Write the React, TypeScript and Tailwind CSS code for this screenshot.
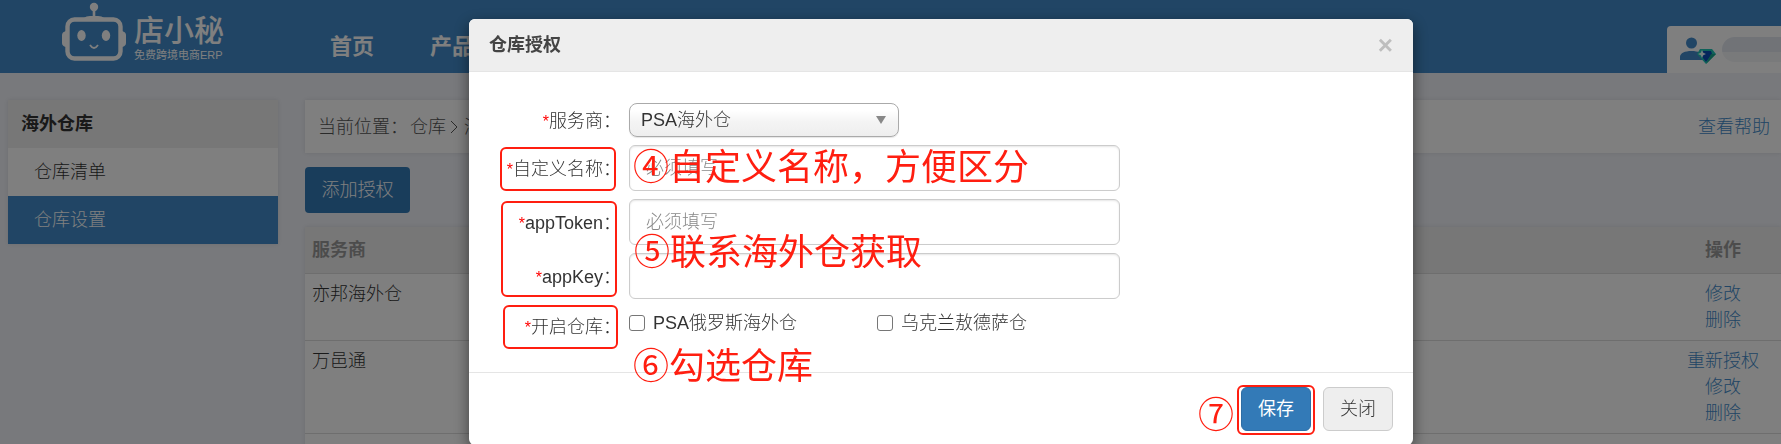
import { useState } from 'react';

const FONT = "font-['Liberation_Sans','Noto_Sans_CJK_SC',sans-serif]";

const sideItems = [
    { label: '仓库清单', active: false },
    { label: '仓库设置', active: true },
];

const providers = [
    { name: '亦邦海外仓', actions: ['修改', '删除'] },
    { name: '万邑通', actions: ['重新授权', '修改', '删除'] },
    { name: '', actions: [] },
];

const warehouses = ['PSA俄罗斯海外仓', '乌克兰敖德萨仓'];

function RobotIcon() {
    return (
        <svg width="64" height="60" viewBox="0 0 64 60" fill="none">
            <circle cx="32" cy="5" r="4.2" fill="#fff" />
            <path d="M32 8v8" stroke="#fff" strokeWidth="2.6" />
            <path d="M22 16q2-2 6-2h8q4 0 6 2z" fill="#fff" />
            <rect x="5.5" y="17.500" width="53" height="39" rx="7" stroke="#fff" strokeWidth="4.4" />
            <path d="M4 29v16q-4-1-4-4v-8q0-3 4-4zM60 29v16q4-1 4-4v-8q0-3-4-4z" fill="#fff" />
            <ellipse cx="19.5" cy="33.500" rx="4.2" ry="5.4" fill="#fff" />
            <ellipse cx="44" cy="33.500" rx="4.2" ry="5.4" fill="#fff" />
            <path d="M28 43q4 6 8 0" stroke="#fff" strokeWidth="1.8" />
        </svg>
    );
}

function UserIcon() {
    return (
        <svg width="36" height="27" viewBox="0 0 36 27">
            <circle cx="11.5" cy="6" r="5.5" fill="#428bca" />
            <path d="M0 23v-3c0-4 5-6 11.500-6S23 16 23 20v3z" fill="#428bca" />
            <path d="M20 12h12l4 5-10 10-9-10z" fill="#1fc5b5" />
            <path d="M23 14h8l1 3-6 8-6-8z" fill="#0a4fb8" />
            <path d="M26 27l5-10h5z" fill="#1aa58c" />
            <path d="M22 13l1.300 2.700L26 17l-2.700 1.300L22 21l-1.300-2.700L18 17l2.700-1.300z" fill="#e8ffff" />
        </svg>
    );
}

function Mark({ className }: { className: string }) {
    return <span className={`pointer-events-none absolute rounded-md border-2 border-[#ff1e10] ${className}`} />;
}

function Note({ className, children }: { className: string; children: string }) {
    return (
        <span className={`pointer-events-none absolute z-10 whitespace-nowrap text-4xl leading-[36px] font-normal text-[#ff1e10] ${className}`}>
            {children}
        </span>
    );
}

function Label({ htmlFor, text }: { htmlFor?: string; text: string }) {
    return (
        <label htmlFor={htmlFor} className="w-[152px] shrink-0 whitespace-nowrap pt-[2px] text-right">
            <span className="text-base text-[#ff0000]">*</span>
            {text}：
        </label>
    );
}

function TextField({ id, value, placeholder, onChange }: { id: string; value: string; placeholder?: string; onChange: (v: string) => void }) {
    return (
        <input
            id={id}
            type="text"
            value={value}
            placeholder={placeholder}
            onChange={(e) => onChange(e.target.value)}
            className="h-[46px] w-[491px] rounded-md border border-[#ccc] bg-white px-4 shadow-[inset_0_1px_2px_rgba(0,0,0,0.1)] outline-none placeholder:text-[#888]"
        />
    );
}

function AuthDialog() {
    const [form, setForm] = useState({ name: '', token: '', key: '' });
    const [checked, setChecked] = useState<string[]>([]);

    const toggle = (w: string) => setChecked(checked.includes(w) ? checked.filter((c) => c !== w) : [...checked, w]);

    return (
        <div role="dialog" aria-labelledby="dialog-title" className="w-[944px] rounded-md bg-white text-[#333] shadow-[0_5px_15px_rgba(0,0,0,0.5)]">
            <div className="flex h-[53px] items-center justify-between rounded-t-md border-b border-[#e5e5e5] bg-[#eee] px-5">
                <h4 id="dialog-title" className="font-bold text-[#444]">仓库授权</h4>
                <button aria-label="关闭窗口" className="text-[26px] leading-none font-bold text-[#bebebe]">×</button>
            </div>

            <form className="flex h-[300px] flex-col gap-2 pt-[31px]">
                <div className="flex items-center gap-2">
                    <Label htmlFor="provider" text="服务商" />
                    <div className="relative">
                        <select
                            id="provider"
                            className="h-[34px] w-[270px] appearance-none rounded-lg border border-[#aaa] bg-linear-to-b from-white from-20% via-[#f4f4f4] via-55% to-[#eee] px-[11px] shadow-[0_1px_1px_rgba(0,0,0,0.1)]"
                        >
                            <option>PSA海外仓</option>
                        </select>
                        <span className="pointer-events-none absolute top-[13px] right-[13px] border-x-5 border-t-8 border-x-transparent border-t-[#888]" />
                    </div>
                </div>

                <div className="relative flex items-center gap-2">
                    <Label htmlFor="name" text="自定义名称" />
                    <TextField id="name" value={form.name} placeholder="必须填写" onChange={(v) => setForm({ ...form, name: v })} />
                    <Mark className="top-[2px] left-[31px] h-11 w-[116px]" />
                    <Note className="top-[5px] left-[164px]">④自定义名称，方便区分</Note>
                </div>

                <div className="relative flex flex-col gap-2">
                    <div className="flex items-center gap-2">
                        <Label htmlFor="token" text="appToken" />
                        <TextField id="token" value={form.token} placeholder="必须填写" onChange={(v) => setForm({ ...form, token: v })} />
                    </div>
                    <div className="flex items-center gap-2">
                        <Label htmlFor="key" text="appKey" />
                        <TextField id="key" value={form.key} onChange={(v) => setForm({ ...form, key: v })} />
                    </div>
                    <Mark className="top-[2px] left-8 h-24 w-[116px]" />
                    <Note className="top-9 left-[165px]">⑤联系海外仓获取</Note>
                </div>

                <div className="relative flex items-start gap-2">
                    <div className="flex pt-[5px]">
                        <Label text="开启仓库" />
                    </div>
                    <div className="flex pt-[3px]">
                        {warehouses.map((w) => (
                            <label key={w} className="flex w-[248px] items-center gap-2">
                                <input
                                    type="checkbox"
                                    checked={checked.includes(w)}
                                    onChange={() => toggle(w)}
                                    className="h-4 w-4 appearance-none rounded-[3px] border border-[#767676] bg-white checked:bg-[#337ab7]"
                                />
                                {w}
                            </label>
                        ))}
                    </div>
                    <Mark className="-top-[2px] left-[34px] h-11 w-[115px]" />
                    <Note className="top-[42px] left-[164px]">⑥勾选仓库</Note>
                </div>
            </form>

            <div className="flex justify-end gap-3 border-t border-[#e5e5e5] px-5 py-[14px]">
                <div className="relative">
                    <Note className="top-[11px] -left-[43px]">⑦</Note>
                    <button className="h-11 w-[70px] rounded-md border border-[#2e6da4] bg-[#337ab7] font-normal text-white">保存</button>
                    <Mark className="-top-[2px] -left-1 h-[50px] w-[78px]" />
                </div>
                <button className="h-11 w-[70px] rounded-md border border-[#ccc] bg-[#eee]">关闭</button>
            </div>
        </div>
    );
}

export default function App() {
    return (
        <div className={`relative h-screen overflow-hidden bg-[#f0f2f8] text-lg leading-[26px] font-light text-[#333] ${FONT}`}>
            <header className="flex h-[73px] justify-between bg-[#428bca] text-white">
                <div className="flex">
                    <a href="#" className="flex w-[330px] gap-2 pt-[2px] pl-[62px]">
                        <RobotIcon />
                        <span className="flex flex-col pt-3">
                            <span className="text-3xl leading-[34px] font-medium">店小秘</span>
                            <span className="text-[11px] leading-[14px] font-normal">免费跨境电商ERP</span>
                        </span>
                    </a>
                    <nav className="flex items-end gap-14 pb-[13px] text-[22px] font-bold">
                        <a href="#">首页</a>
                        <a href="#">产品</a>
                    </nav>
                </div>
                <div className="mt-[26px] flex h-[47px] w-[114px] gap-[6px] rounded-tl-sm bg-white pt-[11px] pl-[13px]">
                    <UserIcon />
                    <span className="h-[25px] flex-1 rounded-l-full bg-linear-to-b from-[#e2e7ef] from-60% to-[#f3f4f7] to-60%" />
                </div>
            </header>

            <div className="flex gap-[27px] pt-[27px] pl-2">
                <aside className="w-[270px] shrink-0 self-start bg-white shadow-[0_0_4px_rgba(0,0,0,0.1)]">
                    <h3 className="flex h-12 items-center bg-[#eee] px-[13px] font-bold">海外仓库</h3>
                    {sideItems.map((item) => (
                        <a
                            key={item.label}
                            href="#"
                            className={`flex h-12 items-center px-[26px] ${item.active ? 'bg-[#428bca] text-white' : ''}`}
                        >
                            {item.label}
                        </a>
                    ))}
                </aside>

                <main className="flex-1">
                    <div className="flex h-[53px] items-center justify-between bg-white pr-[11px] pl-[13px] shadow-[0_0_4px_rgba(0,0,0,0.1)]">
                        <div className="flex items-center text-[#555]">
                            <span>当前位置：</span>
                            <span className="pl-[2px]">仓库</span>
                            <svg width="18" height="18" viewBox="0 0 18 18" fill="none" stroke="#555">
                                <path d="M5 3l6 6-6 6" />
                            </svg>
                            <span>海外仓库</span>
                        </div>
                        <a href="#" className="text-[#428bca]">查看帮助</a>
                    </div>
                    <button className="mt-[14px] h-[46px] w-[105px] rounded-sm bg-[#337ab7] text-white">添加授权</button>
                    <table className="mt-[14px] w-full bg-white shadow-[0_0_4px_rgba(0,0,0,0.1)]">
                        <thead>
                            <tr className="h-[46px] border-b border-[#ddd] bg-[#eee] text-[#999]">
                                <th className="px-[7px] text-left font-bold">服务商</th>
                                <th className="w-[116px] text-center font-bold">操作</th>
                            </tr>
                        </thead>
                        <tbody>
                            {providers.map((p, i) => (
                                <tr key={i} className="border-b border-[#ddd]">
                                    <td className="px-[7px] py-[7px] align-top">{p.name}</td>
                                    <td className="py-[7px] text-center">
                                        {p.actions.map((a) => (
                                            <a key={a} href="#" className="block text-[#428bca]">{a}</a>
                                        ))}
                                    </td>
                                </tr>
                            ))}
                        </tbody>
                    </table>
                    <div className="h-10 bg-white" />
                </main>
            </div>

            <div className="fixed inset-0 flex items-start justify-center overflow-hidden bg-black/50 pt-[19px] pl-[101px]">
                <AuthDialog />
            </div>
        </div>
    );
}
